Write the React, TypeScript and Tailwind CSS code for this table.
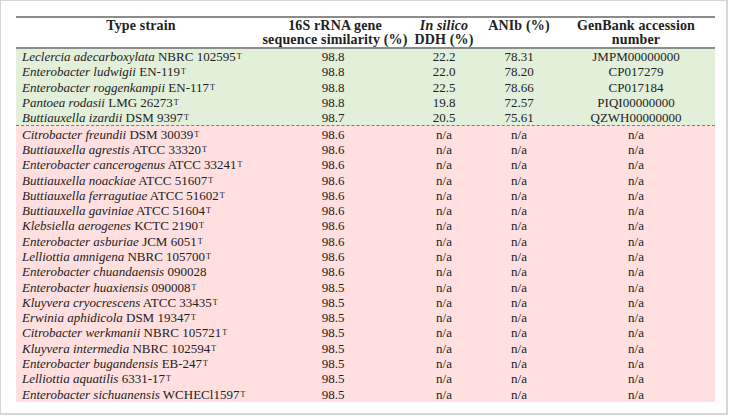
import React from "react";

type Row = { sp: string; st: string; t: boolean; a: string; b: string; c: string; d: string };

const green: Row[] = [
  { sp: "Leclercia adecarboxylata", st: "NBRC 102595", t: true, a: "98.8", b: "22.2", c: "78.31", d: "JMPM00000000" },
  { sp: "Enterobacter ludwigii", st: "EN-119", t: true, a: "98.8", b: "22.0", c: "78.20", d: "CP017279" },
  { sp: "Enterobacter roggenkampii", st: "EN-117", t: true, a: "98.8", b: "22.5", c: "78.66", d: "CP017184" },
  { sp: "Pantoea rodasii", st: "LMG 26273", t: true, a: "98.8", b: "19.8", c: "72.57", d: "PIQI00000000" },
  { sp: "Buttiauxella izardii", st: "DSM 9397", t: true, a: "98.7", b: "20.5", c: "75.61", d: "QZWH00000000" },
];

const pinkList: [string, string, boolean, string][] = [
  ["Citrobacter freundii", "DSM 30039", true, "98.6"],
  ["Buttiauxella agrestis", "ATCC 33320", true, "98.6"],
  ["Enterobacter cancerogenus", "ATCC 33241", true, "98.6"],
  ["Buttiauxella noackiae", "ATCC 51607", true, "98.6"],
  ["Buttiauxella ferragutiae", "ATCC 51602", true, "98.6"],
  ["Buttiauxella gaviniae", "ATCC 51604", true, "98.6"],
  ["Klebsiella aerogenes", "KCTC 2190", true, "98.6"],
  ["Enterobacter asburiae", "JCM 6051", true, "98.6"],
  ["Lelliottia amnigena", "NBRC 105700", true, "98.6"],
  ["Enterobacter chuandaensis", "090028", false, "98.6"],
  ["Enterobacter huaxiensis", "090008", true, "98.5"],
  ["Kluyvera cryocrescens", "ATCC 33435", true, "98.5"],
  ["Erwinia aphidicola", "DSM 19347", true, "98.5"],
  ["Citrobacter werkmanii", "NBRC 105721", true, "98.5"],
  ["Kluyvera intermedia", "NBRC 102594", true, "98.5"],
  ["Enterobacter bugandensis", "EB-247", true, "98.5"],
  ["Lelliottia aquatilis", "6331-17", true, "98.5"],
  ["Enterobacter sichuanensis", "WCHECl1597", true, "98.5"],
];

const pink: Row[] = pinkList.map(([sp, st, t, a]) => ({ sp, st, t, a, b: "n/a", c: "n/a", d: "n/a" }));

function DataRow({ r }: { r: Row }) {
  return (
    <div className="flex h-[15.3px] items-center leading-[15px] whitespace-nowrap">
      <div className="w-[250px] pl-[6px]">
        <i>{r.sp}</i> {r.st}
        {r.t && <sup className="text-[8px] relative top-[-2px] ml-[1px]">T</sup>}
      </div>
      <div className="w-[134px] flex justify-center">{r.a}</div>
      <div className="w-[88px] flex justify-center">{r.b}</div>
      <div className="w-[62px] flex justify-center">{r.c}</div>
      <div className="flex-1 pl-[7px] flex justify-center">{r.d}</div>
    </div>
  );
}

export default function App() {
  return (
    <div className="w-[730px] h-[417px] bg-white">
      <div className="w-[728px] h-[415px] border-l border-t border-r-2 border-b-2 border-[#d6d6d6] pt-[15px] pl-[15px]">
        <div className="w-[699px] [font-family:'Liberation_Serif',serif] text-[13px] text-[#222]">
          <div className="flex h-[33px] border-t-2 border-b-2 border-[#8c8c8c] font-bold text-[14px] tracking-[0.15px] leading-[14px] pt-[1px] whitespace-nowrap">
            <div className="w-[250px] flex justify-center">Type strain</div>
            <div className="w-[134px] flex flex-col items-center pl-[4px]">
              <span>16S rRNA gene</span>
              <span>sequence similarity (%)</span>
            </div>
            <div className="w-[88px] flex flex-col items-center">
              <i>In silico</i>
              <span>DDH (%)</span>
            </div>
            <div className="w-[62px] flex justify-center">ANIb (%)</div>
            <div className="flex-1 pl-[7px] flex flex-col items-center">
              <span>GenBank accession</span>
              <span>number</span>
            </div>
          </div>
          <div className="bg-[#e2efd9] border-b border-dashed border-[#7a7a7a]">
            {green.map((r, i) => (
              <DataRow key={i} r={r} />
            ))}
          </div>
          <div className="bg-[#ffdfdf]">
            {pink.map((r, i) => (
              <DataRow key={i} r={r} />
            ))}
          </div>
        </div>
      </div>
    </div>
  );
}
